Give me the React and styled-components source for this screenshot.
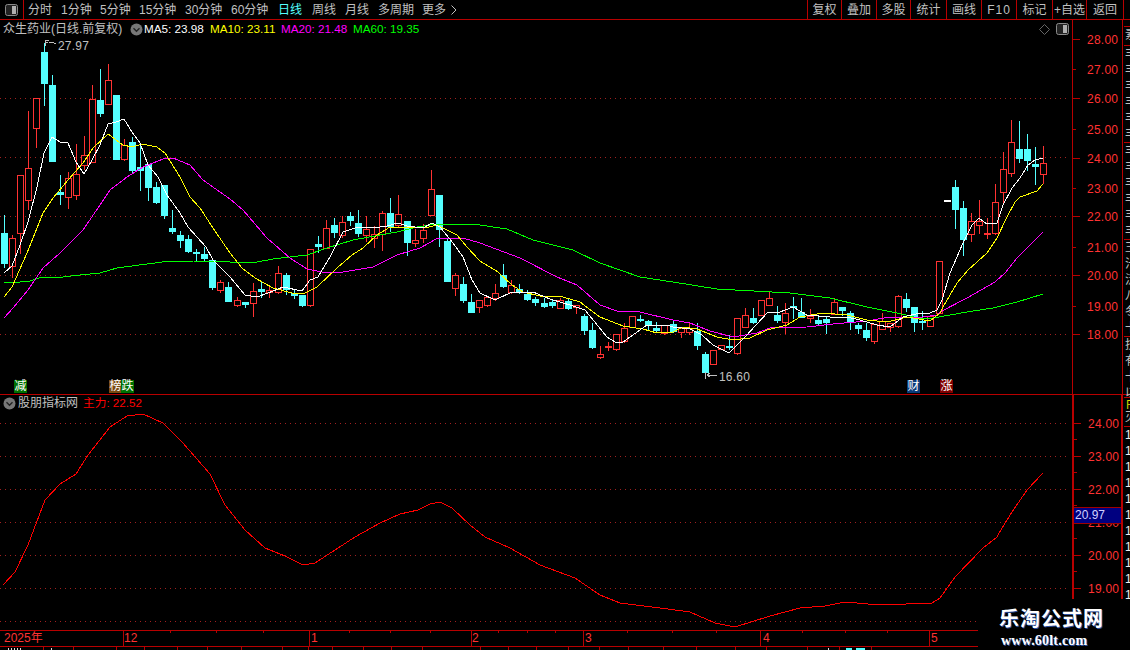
import React from "react";
import styled, { createGlobalStyle } from "styled-components";

const FONT = `"Liberation Sans", "Noto Sans CJK SC", sans-serif`;
const LINE = "#b80000";
const RED = "#ff3232";
const CYAN = "#54ffff";
const GRAY = "#c0c0c0";

const Global = createGlobalStyle`
  html, body { margin: 0; padding: 0; background: #000; overflow: hidden; }
  #root { width: 1130px; height: 650px; }
`;

const Page = styled.div`
  position: relative;
  width: 1130px;
  height: 650px;
  overflow: hidden;
  background: #000;
  color: ${GRAY};
  font: 12px/1 ${FONT};
  display: flex;
  flex-direction: column;
`;

/* toolbar */
const Toolbar = styled.div`
  flex: 0 0 20px;
  box-sizing: border-box;
  display: flex;
  border-bottom: 1px solid ${LINE};
`;
const ToggleButton = styled.div`
  flex: 0 0 24px;
  box-sizing: border-box;
  border-right: 1px solid ${LINE};
  display: flex;
  align-items: center;
  justify-content: center;
`;
const Tabs = styled.div`
  display: flex;
  align-items: center;
  padding-left: 4px;
`;
const Tab = styled.div`
  flex: 0 0 ${(p) => p.$w}px;
  white-space: nowrap;
  color: ${(p) => (p.$active ? CYAN : GRAY)};
  display: flex;
  align-items: center;
`;
const Actions = styled.div`
  margin-left: auto;
  margin-right: 6px;
  display: flex;
`;
const Action = styled.div`
  flex: 0 0 ${(p) => p.$w}px;
  box-sizing: border-box;
  border-left: 1px solid ${LINE};
  display: flex;
  align-items: center;
  justify-content: center;
  white-space: nowrap;
  letter-spacing: ${(p) => (p.$wide ? "1px" : "0")};
  &:last-child { border-right: 1px solid ${LINE}; }
`;

/* chart panels */
const Row = styled.div`
  flex: 0 0 ${(p) => p.$h}px;
  box-sizing: border-box;
  display: flex;
  border-bottom: ${(p) => (p.$rule ? `1px solid ${LINE}` : "none")};
`;
const Plot = styled.div`
  position: relative;
  flex: 0 0 1072px;
  svg { display: block; }
`;
const Axis = styled.div`
  position: relative;
  flex: 0 0 51px;
  box-sizing: border-box;
  border-left: ${(p) => p.$bw}px solid ${LINE};
  border-right: ${(p) => p.$bw}px solid ${LINE};
`;
const AxisTick = styled.div`
  position: absolute;
  left: 0;
  width: ${(p) => (p.$long ? 7 : 3)}px;
  height: 1px;
  background: ${LINE};
`;
const AxisLabel = styled.div`
  position: absolute;
  left: 14px;
  color: ${RED};
  height: 14px;
  line-height: 14px;
  letter-spacing: 0.02em;
`;
const PriceBox = styled.div`
  position: absolute;
  left: 0;
  right: 0;
  box-sizing: border-box;
  height: 17px;
  background: #000080;
  border-top: 1px solid #a00000;
  border-bottom: 1px solid #a00000;
  color: #d0d0ff;
  line-height: 15px;
  padding-left: 1px;
`;

const Legend = styled.div`
  position: absolute;
  left: 3px;
  top: ${(p) => p.$top}px;
  height: 16px;
  display: flex;
  align-items: center;
  white-space: nowrap;
`;
const LegendName = styled.span`
  color: ${GRAY};
`;
const LegendValue = styled.span`
  color: ${(p) => p.$c};
  position: absolute;
  left: ${(p) => p.$x}px;
  font-size: 11.7px;
`;
const Badge = styled.div`
  position: absolute;
  left: ${(p) => p.$x}px;
  top: 360px;
  width: 13px;
  height: 13px;
  background: ${(p) => p.$bg};
  color: #fff;
  line-height: 13px;
  text-align: center;
`;
const CornerIcons = styled.div`
  position: absolute;
  right: 3px;
  top: 3px;
  display: flex;
  gap: 6px;
  align-items: center;
`;

/* time axis */
const TimeAxis = styled.div`
  position: relative;
  flex: 0 0 16px;
  border-bottom: 1px solid ${LINE};
  box-sizing: content-box;
  svg { position: absolute; left: 0; top: 0; }
`;
const TimeLabel = styled.span`
  position: absolute;
  left: ${(p) => p.$x}px;
  top: 1px;
  color: ${RED};
  line-height: 15px;
`;
const Status = styled.div`
  flex: 1;
  svg { display: block; }
`;

/* cropped quote column */
const Strip = styled.div`
  position: absolute;
  left: 1124px;
  top: 20px;
  width: 6px;
  height: 579px;
  overflow: hidden;
  display: flex;
  flex-direction: column;
`;
const StripCell = styled.div`
  flex: 0 0 ${(p) => p.$h}px;
  box-sizing: border-box;
  border-top: ${(p) => (p.$rule ? `1px solid ${LINE}` : "none")};
  color: ${(p) => p.$c || GRAY};
  padding-left: 1px;
  line-height: 16px;
  white-space: pre;
  overflow: hidden;
`;

/* watermark */
const Watermark = styled.div`
  position: absolute;
  left: 978px;
  top: 599px;
  width: 152px;
  height: 51px;
  background: #000;
  display: flex;
  flex-direction: column;
  align-items: flex-start;
`;
const WatermarkName = styled.div`
  margin-top: 8px;
  margin-left: 21px;
  font: 700 20px/22px "Noto Sans CJK SC", sans-serif;
  letter-spacing: 1px;
  color: #fff;
  text-shadow: 1px 1px 0 #2a4fa0;
  white-space: nowrap;
`;
const WatermarkUrl = styled.div`
  margin-top: 4px;
  margin-left: 23px;
  font: 700 14px/16px "Liberation Serif", serif;
  letter-spacing: 0.2px;
  color: #fff;
  text-shadow: 1px 1px 0 #2a4fa0;
  white-space: nowrap;
`;

/* data: [x, kind, top, bottom, wickTop, wickBottom] */
const CANDLES = [
  [4,"c",233,263,215,267],[12,"r",238,266,235,277],[20,"r",175,233,175,253],[28,"r",168,200,111,209],
  [36,"r",98,128,98,147],[44,"c",52,83,43,105],[52,"c",85,161,75,161],[60,"c",192,194,175,204],
  [68,"r",178,197,172,208],[76,"r",174,195,144,199],[84,"r",155,165,136,169],[92,"r",99,162,85,162],
  [100,"c",100,113,69,116],[108,"r",80,104,64,104],[116,"c",95,159,95,159],[124,"r",145,159,139,160],
  [132,"c",142,170,137,172],[140,"c",167,170,145,190],[148,"c",164,187,164,200],[156,"c",187,202,182,203],
  [164,"c",185,215,185,218],[172,"c",228,231,210,233],[180,"c",235,240,231,247],[188,"c",239,251,235,252],
  [196,"c",252,253,249,260],[204,"c",254,258,247,260],[212,"c",260,287,259,289],[220,"r",282,290,280,292],
  [228,"c",287,301,282,301],[237,"r",300,305,297,306],[245,"c",302,304,302,307],[253,"r",291,303,283,316],
  [261,"c",289,291,282,297],[269,"r",290,292,287,297],[278,"r",273,292,266,293],[286,"c",275,289,273,294],
  [294,"c",293,295,290,298],[302,"c",295,305,295,306],[310,"r",249,305,249,306],[318,"c",244,246,236,252],
  [326,"r",228,248,220,248],[334,"c",225,232,218,237],[342,"r",222,235,216,237],[350,"c",216,220,212,225],
  [358,"c",223,233,210,236],[366,"r",229,235,216,241],[374,"r",234,238,226,247],[382,"r",213,234,211,250],
  [390,"c",213,226,198,231],[398,"r",214,225,195,227],[407,"c",221,242,221,255],[415,"r",240,243,229,246],
  [423,"r",230,238,224,242],[431,"r",189,215,170,215],[439,"c",195,229,195,246],[447,"c",241,281,239,281],
  [455,"r",275,288,273,295],[463,"c",284,300,277,302],[471,"c",302,312,294,312],[479,"r",300,307,300,312],
  [487,"r",297,305,297,306],[495,"r",293,298,284,300],[503,"c",275,286,264,287],[511,"r",285,292,280,293],
  [519,"c",289,292,284,293],[527,"c",294,299,290,300],[535,"c",299,302,297,305],[544,"c",303,306,298,307],
  [552,"c",302,305,299,307],[560,"r",300,308,298,308],[568,"c",301,308,299,309],[576,"r",305,307,305,313],
  [584,"c",316,330,314,334],[592,"c",330,347,323,348],[600,"r",354,357,346,358],[608,"r",346,347,342,350],
  [616,"r",334,349,334,350],[624,"r",328,341,323,342],[632,"r",316,327,316,327],[640,"c",319,320,315,321],
  [648,"c",321,325,320,329],[656,"c",328,330,322,332],[664,"r",325,333,325,334],[673,"c",324,331,320,332],
  [681,"r",328,332,328,337],[689,"r",328,332,322,334],[697,"c",331,345,323,349],[705,"c",354,372,352,373],
  [713,"r",350,364,350,364],[721,"r",345,349,345,349],[729,"c",346,347,335,349],[737,"r",318,353,318,354],
  [745,"r",315,327,308,327],[753,"c",318,322,308,323],[761,"r",300,315,300,315],[769,"r",298,305,292,305],
  [777,"c",315,320,306,322],[785,"r",313,322,303,333],[793,"c",306,307,297,318],[801,"c",312,317,298,317],
  [810,"r",316,318,309,322],[818,"c",320,323,317,325],[826,"c",319,322,317,333],[834,"r",302,314,298,314],
  [842,"c",307,310,307,315],[850,"c",313,321,311,329],[858,"c",325,328,323,333],[866,"c",330,337,323,340],
  [874,"r",324,341,324,343],[882,"r",321,329,313,329],[890,"r",323,327,323,331],[898,"r",296,326,295,327],
  [906,"c",299,307,293,311],[914,"c",307,322,307,331],[922,"c",321,322,311,329],[930,"r",316,326,316,326],
  [939,"r",261,313,261,313],[947,"w",200,201,200,201],[955,"c",187,209,180,228],[963,"c",208,239,201,255],
  [971,"r",221,234,213,241],[979,"r",221,225,200,233],[987,"r",233,234,218,238],[995,"r",202,233,184,234],
  [1003,"r",169,192,152,202],[1011,"r",142,173,120,176],[1019,"c",149,158,121,162],[1027,"c",149,160,134,170],
  [1035,"c",164,166,147,184],[1043,"r",163,174,146,183],
];

const MA5 = [[4,273],[12,266],[20,245],[28,222],[37,187],[44,153],[52,137],[60,142],[68,143],[76,162],[84,174],[92,160],[100,145],[108,124],[116,122],[124,119],[132,132],[140,143],[148,165],[158,177],[167,195],[180,213],[188,227],[197,237],[206,247],[213,260],[230,277],[245,295],[257,297],[268,293],[283,287],[302,291],[310,280],[318,277],[330,257],[343,232],[358,227],[373,228],[387,226],[398,223],[407,226],[423,228],[432,223],[440,227],[453,243],[463,257],[472,280],[480,293],[495,300],[512,292],[533,292],[550,299],[573,306],[585,310],[607,337],[615,342],[623,342],[647,325],[667,325],[673,327],[690,329],[702,335],[713,345],[729,353],[745,337],[768,312],[780,312],[793,307],[807,315],[830,317],[847,317],[860,320],[877,325],[890,327],[903,317],[920,313],[930,313],[937,310],[942,300],[950,273],[963,243],[972,225],[979,218],[987,224],[997,223],[1003,205],[1012,188],[1020,178],[1028,165],[1035,160],[1043,158]];
const MA10 = [[4,297],[12,287],[27,253],[43,213],[53,198],[68,180],[83,163],[93,148],[108,134],[123,145],[132,147],[142,144],[157,147],[165,153],[180,177],[190,197],[200,208],[213,228],[230,253],[242,268],[255,278],[273,288],[292,293],[303,294],[317,287],[337,268],[352,255],[363,248],[377,235],[390,227],[407,227],[425,228],[437,225],[457,235],[467,247],[480,261],[498,272],[512,285],[523,292],[540,296],[563,297],[580,302],[600,317],[623,326],[643,329],[657,333],[673,332],[683,327],[697,329],[707,333],[717,337],[733,340],[750,338],[767,330],[787,325],[800,317],[823,313],[847,315],[867,320],[887,322],[907,317],[930,321],[940,313],[943,307],[957,283],[968,270],[987,253],[997,238],[1007,217],[1015,202],[1020,197],[1037,191],[1043,184]];
const MA20 = [[4,318],[13,308],[28,290],[43,268],[60,253],[83,230],[100,205],[110,190],[127,177],[143,167],[163,159],[173,158],[190,165],[203,180],[220,192],[230,199],[243,210],[267,238],[290,258],[307,269],[327,273],[343,272],[373,267],[397,255],[420,248],[438,238],[463,238],[480,243],[520,258],[557,277],[577,285],[600,305],[617,311],[640,312],[673,320],[690,323],[710,331],[733,337],[757,333],[770,328],[807,327],[833,324],[867,321],[890,317],[923,317],[937,315],[940,312],[967,298],[995,282],[1005,273],[1017,258],[1028,247],[1043,232]];
const MA60 = [[4,283],[20,282],[30,281],[42,277],[57,277],[63,277],[80,275],[100,273],[117,268],[147,264],[170,261],[193,261],[230,262],[257,262],[273,259],[307,255],[327,248],[353,240],[397,232],[417,227],[437,224],[473,224],[507,229],[533,240],[573,250],[600,263],[640,277],[673,282],[717,289],[790,293],[830,298],[867,307],[897,313],[923,319],[933,318],[967,312],[993,308],[1017,302],[1043,294]];
const MAIN = [[3,585],[15,572],[28,545],[45,500],[60,484],[76,474],[88,455],[110,427],[127,416],[143,414],[163,423],[182,442],[210,474],[225,505],[245,530],[265,548],[285,556],[303,565],[315,563],[335,550],[355,537],[380,523],[400,514],[418,510],[430,504],[440,502],[452,508],[470,525],[485,537],[510,548],[540,565],[575,578],[600,595],[620,603],[660,608],[690,612],[715,623],[735,627],[770,616],[800,608],[825,606],[845,602],[880,605],[932,603],[940,598],[955,577],[983,548],[997,537],[1002,528],[1012,512],[1027,490],[1043,473]];

const pts = (a) => a.map((p) => p.join(",")).join(" ");

function Candle({ d }) {
  const [x, k, top, bot, wt, wb] = d;
  const c = k === "r" ? RED : k === "c" ? CYAN : "#fff";
  const thin = bot - top <= 1;
  return (
    <g>
      <rect x={x} y={wt} width="1" height={wb - wt + 1} fill={c} />
      {k === "c" || k === "w" || thin ? (
        <rect x={x - 3} y={top} width="7" height={Math.max(bot - top + 1, 2)} fill={c} />
      ) : (
        <rect x={x - 2.5} y={top + 0.5} width="6" height={bot - top} fill="#000" stroke={c} strokeWidth="1" />
      )}
    </g>
  );
}

const Dots = ({ ys }) =>
  ys.map((y) => (
    <line key={y} x1="0" x2="1068" y1={y + 0.5} y2={y + 0.5} stroke="#a02020" strokeWidth="1" strokeDasharray="1 4" />
  ));

const Chevron = () => (
  <svg width="13" height="13" viewBox="0 0 13 13" style={{ flex: "none" }}>
    <circle cx="6.5" cy="6.5" r="6" fill="#777" />
    <path d="M3.5 5.2 L6.5 8.2 L9.5 5.2" fill="none" stroke="#222" strokeWidth="1.4" />
  </svg>
);
const ToggleIcon = ({ side }) => (
  <svg width="13" height="12" viewBox="0 0 13 12">
    <rect x="0.5" y="0.5" width="12" height="11" rx="2" fill="#222" stroke="#8a8a8a" />
    <rect x={side === "l" ? 2 : 7} y="2" width="4" height="8" fill="#b0b0b0" />
  </svg>
);

const TABS = [["分时",33],["1分钟",39],["5分钟",39],["15分钟",46],["30分钟",46],["60分钟",47],["日线",34,true],["周线",33],["月线",33],["多周期",44]];
const ACTIONS = [["复权",34],["叠加",35],["多股",34],["统计",36],["画线",35],["F10",35,true],["标记",36],["+自选",34],["返回",38]];
const UP_LABELS = [[28,39],[27,69],[26,98],[25,129],[24,158],[23,188],[22,216],[21,247],[20,275],[19,306],[18,334]];
const LOW_LABELS = [[24,423],[23,456],[22,489],[21,522],[20,555],[19,588]];
const MONTHS = [["2025年",4],["12",124],["1",311],["2",472],["3",585],["4",763],["5",931]];
const MAJOR = [123,309,471,583,760,929];
const MINOR = [170,216,263,349,390,430,498,527,555,627,672,716,802,845,887];
const STATUS = [43,73,116,144,177,207,241,282,308,332,363,391,422,480,508,536,568,599,628,663,696,735,766,807,839,871];

export default function App() {
  return (
    <Page>
      <Global />
      <Toolbar>
        <ToggleButton><ToggleIcon side="r" /></ToggleButton>
        <Tabs>
          {TABS.map(([t, w, a]) => <Tab key={t} $w={w} $active={a}>{t}</Tab>)}
          <Tab $w={36}>
            更多
            <svg width="8" height="12" viewBox="0 0 8 12" style={{ marginLeft: 4 }}>
              <path d="M1.5 1.5 L6 6 L1.5 10.5" fill="none" stroke={GRAY} />
            </svg>
          </Tab>
        </Tabs>
        <Actions>
          {ACTIONS.map(([t, w, wide]) => <Action key={t} $w={w} $wide={wide}>{t}</Action>)}
        </Actions>
      </Toolbar>

      <Row $h={375} $rule>
        <Plot>
          <svg width="1072" height="374" viewBox="0 20 1072 374" shapeRendering="crispEdges">
            <Dots ys={[98,157,216,275,334]} />
            {CANDLES.map((d) => <Candle key={d[0]} d={d} />)}
            <polyline points={pts(MA60)} fill="none" stroke="#00ff00" strokeWidth="1" />
            <polyline points={pts(MA20)} fill="none" stroke="#ff00ff" strokeWidth="1" />
            <polyline points={pts(MA10)} fill="none" stroke="#ffff00" strokeWidth="1" />
            <polyline points={pts(MA5)} fill="none" stroke="#ffffff" strokeWidth="1" />
            <path d="M45 46V40H49M46 42H48M49 43L52 42L56 44" fill="none" stroke={GRAY} />
            <path d="M705 372V379M707 375H717M707 375L710 373M707 375L710 377" fill="none" stroke={GRAY} />
            <text x="58" y="50" fill={GRAY} fontSize="12" fontFamily="Liberation Sans" letterSpacing="0.2">27.97</text>
            <text x="719" y="381" fill={GRAY} fontSize="12" fontFamily="Liberation Sans" letterSpacing="0.2">16.60</text>
          </svg>
          <Legend $top={1}>
            <LegendName>众生药业(日线.前复权)</LegendName>
            <span style={{ width: 5 }} />
            <span style={{ marginLeft: 3, display: "flex" }}><Chevron /></span>
            <LegendValue $c="#fff" $x={141}>MA5: 23.98</LegendValue>
            <LegendValue $c="#ffff00" $x={207}>MA10: 23.11</LegendValue>
            <LegendValue $c="#ff00ff" $x={278}>MA20: 21.48</LegendValue>
            <LegendValue $c="#00ff00" $x={350}>MA60: 19.35</LegendValue>
          </Legend>
          <CornerIcons>
            <svg width="11" height="11" viewBox="0 0 11 11">
              <path d="M5.5 0.5 L10.5 5.5 L5.5 10.5 L0.5 5.5 Z" fill="none" stroke="#666" />
            </svg>
            <ToggleIcon side="r" />
          </CornerIcons>
          <Badge $x={14} $bg="#007000">减</Badge>
          <Badge $x={109} $bg="#7a4a10">榜</Badge>
          <Badge $x={121} $bg="#007000">跌</Badge>
          <Badge $x={907} $bg="#0a3a78">财</Badge>
          <Badge $x={940} $bg="#800000">涨</Badge>
        </Plot>
        <Axis $bw={1}>
          {UP_LABELS.map(([v, y]) => (
            <React.Fragment key={v}>
              <AxisTick $long={v % 2 === 0} style={{ top: y - 20 }} />
              <AxisLabel style={{ top: y - 26 }}>{v}.00</AxisLabel>
            </React.Fragment>
          ))}
        </Axis>
      </Row>

      <Row $h={235}>
        <Plot>
          <svg width="1072" height="235" viewBox="0 395 1072 235" shapeRendering="crispEdges">
            <Dots ys={[423,456,489,522,555,588,621]} />
            <polyline points={pts(MAIN)} fill="none" stroke="#ff0000" strokeWidth="1" />
          </svg>
          <Legend $top={0}>
            <Chevron />
            <LegendName style={{ marginLeft: 2 }}>股朋指标网</LegendName>
            <LegendValue $c="#ff0000" $x={80}>主力: 22.52</LegendValue>
          </Legend>
        </Plot>
        <Axis $bw={2}>
          {LOW_LABELS.map(([v, y]) => (
            <React.Fragment key={v}>
              <AxisTick $long style={{ top: y - 395 }} />
              <AxisTick style={{ top: y - 395 + 16 }} />
              <AxisLabel style={{ top: y - 401 }}>{v}.00</AxisLabel>
            </React.Fragment>
          ))}
          <PriceBox style={{ top: 112 }}>20.97</PriceBox>
        </Axis>
      </Row>

      <TimeAxis>
        <svg width="1130" height="16" shapeRendering="crispEdges">
          <rect width="1130" height="1" fill={LINE} />
          {MAJOR.map((x) => <rect key={x} x={x} width="1" height="16" fill={LINE} />)}
          {MINOR.map((x) => <rect key={x} x={x} width="1" height="3" fill={LINE} />)}
        </svg>
        {MONTHS.map(([t, x]) => <TimeLabel key={t} $x={x}>{t}</TimeLabel>)}
      </TimeAxis>
      <Status>
        <svg width="1130" height="3" shapeRendering="crispEdges">
          {STATUS.map((x) => <rect key={x} x={x} width="1" height="3" fill={LINE} />)}
          {[8,11,14,17,20,51,828].map((x) => <rect key={x} x={x} y="1" width="1" height="2" fill="#ddd" />)}
          <rect x="846" y="1" width="6" height="2" fill={CYAN} />
          <rect x="856" y="1" width="9" height="2" fill={CYAN} />
        </svg>
      </Status>

      <Strip>
        <StripCell $h={6} />
        <StripCell $h={19} $rule>素</StripCell>
        <StripCell $h={97} $rule>{"丰\n丰\n丰\n丰\n丰\n丰"}</StripCell>
        <StripCell $h={97} $rule>{"丰\n丰\n丰\n丰\n丰\n丰"}</StripCell>
        <StripCell $h={97} $rule>{"王\n汁\n泛\n八\n冬\n卡"}</StripCell>
        <StripCell $h={61} $rule>{"技\n有\n卡\n以"}</StripCell>
        <StripCell $h={12} $rule $c="#e0e000">日</StripCell>
        <StripCell $h={17}>灭</StripCell>
        <StripCell $h={173} $rule $c="#f0f0f0">{"1\n1\n1\n1\n1\n1\n1\n1\n1\n1\n1"}</StripCell>
      </Strip>

      <Watermark>
        <WatermarkName>乐淘公式网</WatermarkName>
        <WatermarkUrl>www.60lt.com</WatermarkUrl>
      </Watermark>
    </Page>
  );
}
